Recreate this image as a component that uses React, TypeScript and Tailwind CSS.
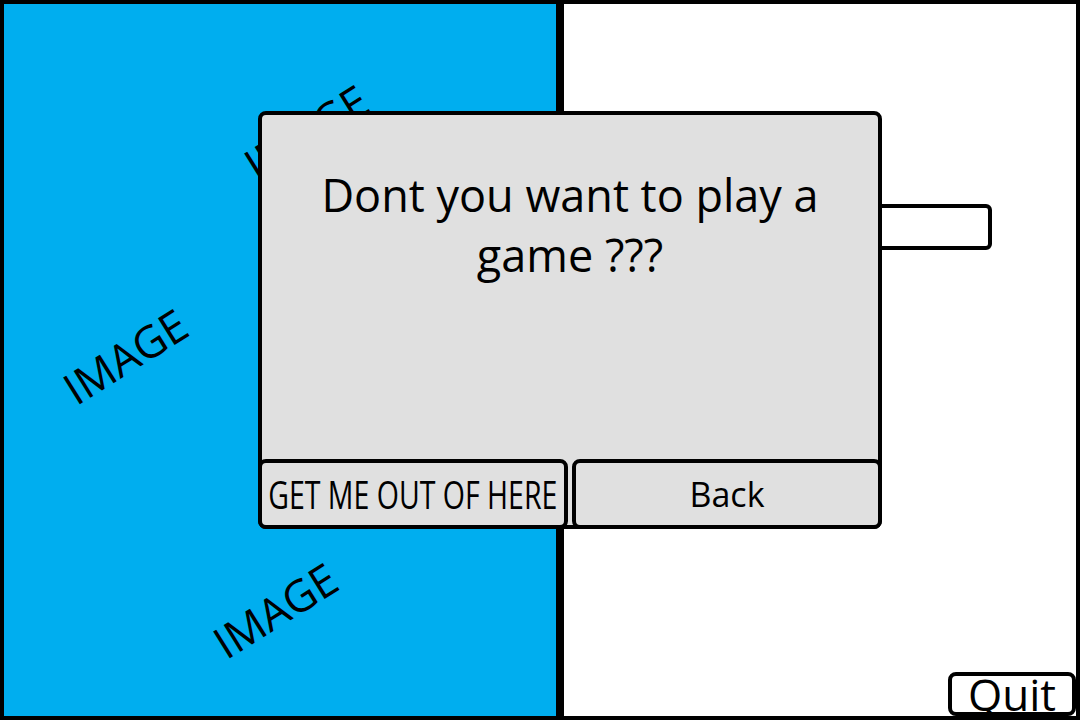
import React from "react";

function ImageLabel({ className }: { className: string }) {
  return (
    <span
      className={
        "absolute text-[44px] leading-none text-black -rotate-[32deg] origin-center " +
        className
      }
    >
      IMAGE
    </span>
  );
}

export default function App() {
  return (
    <div
      className="relative flex h-[720px] w-[1080px] overflow-hidden border-4 border-black bg-black"
      style={{ fontFamily: '"Open Sans", "Noto Sans", sans-serif' }}
    >
      {/* left image panel */}
      <div className="relative w-[552px] shrink-0 bg-[#00aeef]">
        <ImageLabel className="left-[234px] top-[106px]" />
        <ImageLabel className="left-[53px] top-[330px]" />
        <ImageLabel className="left-[203px] top-[584px]" />
      </div>

      {/* right panel */}
      <div className="ml-2 flex flex-1 flex-col bg-white">
        <div className="mt-[200px] ml-[118px] h-[46px] w-[310px] rounded-md border-4 border-black bg-white" />
        <button className="mt-auto self-end flex h-[44px] items-center rounded-lg border-4 border-black bg-white px-[16px] text-[44px] leading-[36px] text-black">
          Quit
        </button>
      </div>

      {/* dialog */}
      <div className="absolute left-[254px] top-[107px] flex h-[418px] w-[624px] flex-col rounded-lg border-4 border-black bg-[#e0e0e0]">
        <p className="px-4 pt-[50px] text-center text-[45px] leading-[60px] text-black">
          Dont you want to play a game ???
        </p>
        <div className="mt-auto -mx-1 -mb-1 grid grid-cols-2 gap-1">
          <button className="flex h-[70px] min-w-0 items-center justify-center overflow-visible rounded-lg border-4 border-black bg-[#e0e0e0] text-[38px] text-black">
            <span className="inline-block scale-x-[0.75] whitespace-nowrap">GET ME OUT OF HERE</span>
          </button>
          <button className="flex h-[70px] min-w-0 items-center justify-center rounded-lg border-4 border-black bg-[#e0e0e0] text-[34px] text-black">
            Back
          </button>
        </div>
      </div>
    </div>
  );
}
